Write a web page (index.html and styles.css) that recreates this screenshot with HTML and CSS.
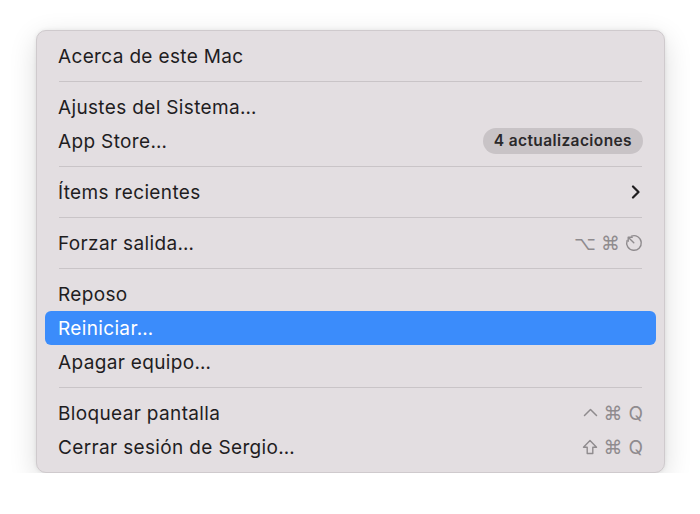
FILE: index.html
```html
<!DOCTYPE html>
<html lang="es">
<head>
    <meta charset="UTF-8">
    <meta name="viewport" content="width=device-width, initial-scale=1.0">
    <title>Menú Apple</title>
    <link rel="stylesheet" href="styles.css">
</head>
<body>
    <div class="menu">
        <div class="item"><span>Acerca de este Mac</span></div>
        <div class="sep"></div>
        <div class="item"><span>Ajustes del Sistema…</span></div>
        <div class="item">
            <span>App Store…</span>
            <span class="badge">4 actualizaciones</span>
        </div>
        <div class="sep"></div>
        <div class="item">
            <span>Ítems recientes</span>
            <svg class="chevron" width="10" height="14" viewBox="0 0 10 14">
                <path d="M2 1.5 L7.5 7 L2 12.5" fill="none" stroke="#1f1d1f" stroke-width="2.2" stroke-linecap="round" stroke-linejoin="round"/>
            </svg>
        </div>
        <div class="sep"></div>
        <div class="item">
            <span>Forzar salida…</span>
            <span class="keys">
                <span class="key">⌥</span>
                <span class="key">⌘</span>
                <svg class="esc" width="18" height="18" viewBox="0 0 18 18">
                    <path d="M6.5 2.1 A7.3 7.3 0 1 1 2.1 6.5" fill="none" stroke="currentColor" stroke-width="1.4" stroke-linecap="round"/>
                    <path d="M3.2 3.2 L8.8 8.8 M3.2 3.2 L3.2 7.2 M3.2 3.2 L7.2 3.2" fill="none" stroke="currentColor" stroke-width="1.4" stroke-linecap="round" stroke-linejoin="round"/>
                </svg>
            </span>
        </div>
        <div class="sep"></div>
        <div class="item"><span>Reposo</span></div>
        <div class="item active"><span>Reiniciar…</span></div>
        <div class="item"><span>Apagar equipo…</span></div>
        <div class="sep"></div>
        <div class="item">
            <span>Bloquear pantalla</span>
            <span class="keys">
                <svg class="ctrl" width="15" height="16" viewBox="0 0 15 16">
                    <path d="M1.5 10.5 L7.5 4.5 L13.5 10.5" fill="none" stroke="currentColor" stroke-width="1.5" stroke-linecap="round" stroke-linejoin="round"/>
                </svg>
                <span class="key">⌘</span>
                <span class="key letter">Q</span>
            </span>
        </div>
        <div class="item">
            <span>Cerrar sesión de Sergio…</span>
            <span class="keys">
                <svg class="shift" width="16" height="16" viewBox="0 0 16 16">
                    <path d="M8 1.5 L14.5 8.2 L10.8 8.2 L10.8 14.5 L5.2 14.5 L5.2 8.2 L1.5 8.2 Z" fill="none" stroke="currentColor" stroke-width="1.4" stroke-linejoin="round"/>
                </svg>
                <span class="key">⌘</span>
                <span class="key letter">Q</span>
            </span>
        </div>
    </div>
</body>
</html>
```

FILE: styles.css
```css
body {
    margin: 0;
    background: #ffffff;
    font-family: Inter, "Noto Sans", sans-serif;
}
.menu {
    width: 629px;
    margin: 30px 0 0 36px;
    padding: 8px;
    background: #e3dee1;
    border: 1px solid #cfcacd;
    border-radius: 10px;
    box-shadow: 0 8px 28px rgba(0, 0, 0, 0.14), 0 0 4px rgba(0, 0, 0, 0.08);
    box-sizing: border-box;
}
.item {
    height: 34px;
    display: flex;
    align-items: center;
    justify-content: space-between;
    padding: 0 13px 0 13px;
    font-size: 19px;
    letter-spacing: 0.35px;
    color: #1f1d1f;
    border-radius: 6px;
}
.item.active {
    background: #3b8cfb;
    color: #ffffff;
}
.sep {
    height: 1px;
    margin: 8px 14px;
    background: #c9c4c7;
}
.badge {
    background: #c8c3c6;
    border-radius: 13px;
    padding: 3px 11px 4px;
    font-size: 15.5px;
    font-weight: 600;
    letter-spacing: 0.4px;
    color: #2a282a;
}
.chevron {
    margin-right: 2px;
}
.keys {
    display: flex;
    align-items: center;
    gap: 5px;
    color: #8f8b8e;
    letter-spacing: 0;
}
.key {
    font-family: "DejaVu Sans", sans-serif;
    font-size: 19px;
}
.key.letter {
    font-family: Inter, "Noto Sans", sans-serif;
    font-size: 19px;
    margin-left: 1px;
}
```
